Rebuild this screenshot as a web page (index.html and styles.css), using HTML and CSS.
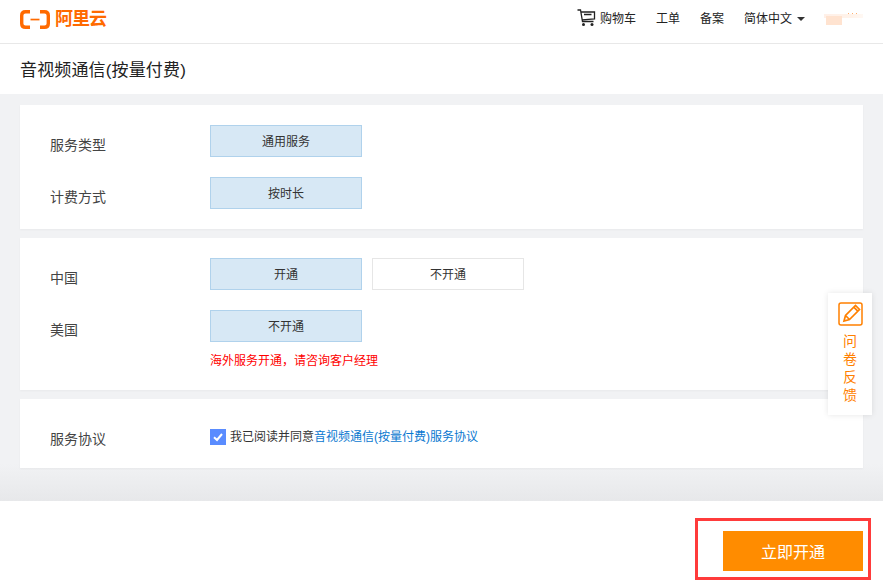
FILE: index.html
```html
<!DOCTYPE html>
<html lang="zh-CN">
<head>
<meta charset="utf-8">
<title>音视频通信(按量付费)</title>
<link rel="stylesheet" href="styles.css">
</head>
<body>
<header class="topbar">
  <a class="logo">
    <svg class="logo-icon" width="30" height="19" viewBox="0 0 30 19"><path d="M10 1.700H5.500C3 1.700 1.700 3 1.700 5.500V13.500C1.700 16 3 17.300 5.500 17.300H10" fill="none" stroke="#ff6a00" stroke-width="3.400"/><path d="M20 1.700H24.500C27 1.700 28.300 3 28.300 5.500V13.500C28.300 16 27 17.300 24.500 17.300H20" fill="none" stroke="#ff6a00" stroke-width="3.400"/><rect x="10.500" y="8.700" width="9" height="1.700" fill="#ff6a00"/></svg>
    <span class="logo-text">阿里云</span>
  </a>
  <nav class="topnav">
    <a class="nav-item cart">
      <svg width="19" height="18" viewBox="0 0 19 18"><path d="M0.500 1H3.500L5.500 12.500H16.500M4 3H17.500V9.800L5.200 10.800M7 5.500H14.500" fill="none" stroke="#222" stroke-width="1.300"/><circle cx="6.500" cy="15.500" r="1.500" fill="#222"/><circle cx="15" cy="15.500" r="1.500" fill="#222"/></svg>
      <span>购物车</span>
    </a>
    <a class="nav-item">工单</a>
    <a class="nav-item">备案</a>
    <a class="nav-item lang">简体中文<i class="caret"></i></a>
    <div class="user" aria-hidden="true"><i class="blur-a"></i><i class="blur-b"></i><i class="blur-c"></i></div>
  </nav>
</header>
<div class="titlebar"><h1>音视频通信(按量付费)</h1></div>
<main class="content">
  <section class="card card-a">
    <div class="row">
      <div class="label">服务类型</div>
      <div class="options"><button class="opt on">通用服务</button></div>
    </div>
    <div class="row">
      <div class="label">计费方式</div>
      <div class="options"><button class="opt on">按时长</button></div>
    </div>
  </section>
  <section class="card card-b">
    <div class="row">
      <div class="label">中国</div>
      <div class="options"><button class="opt on">开通</button><button class="opt">不开通</button></div>
    </div>
    <div class="row">
      <div class="label">美国</div>
      <div class="options"><button class="opt on">不开通</button></div>
    </div>
    <p class="warn">海外服务开通，请咨询客户经理</p>
  </section>
  <section class="card card-c">
    <div class="label">服务协议</div>
    <div class="agree">
      <span class="check"><svg width="16" height="16" viewBox="0 0 16 16"><path d="M4 8.300L7 11L12 5" fill="none" stroke="#fff" stroke-width="2"/></svg></span>
      <span class="agree-text">我已阅读并同意<a class="link">音视频通信(按量付费)服务协议</a></span>
    </div>
  </section>
</main>
<footer class="footer">
  <div class="highlight"><button class="submit">立即开通</button></div>
</footer>
<aside class="feedback">
  <svg width="26" height="24" viewBox="0 0 26 24"><rect x="1" y="1" width="23" height="22" rx="2" fill="none" stroke="#ff8000" stroke-width="1.500"/><path d="M6 19L7.500 13.500L17.500 3.500L21.500 7.500L11.500 17.500ZM15.800 5.200L19.800 9.200M7.500 13.500L11.500 17.500" fill="none" stroke="#ff8000" stroke-width="1.700"/></svg>
  <span class="fb-text">问</span><span class="fb-text">卷</span><span class="fb-text">反</span><span class="fb-text">馈</span>
</aside>
</body>
</html>
```

FILE: styles.css
```css
* { box-sizing: border-box; }
html, body { margin: 0; padding: 0; }
body {
  position: relative;
  width: 883px;
  height: 586px;
  overflow: hidden;
  background: #fff;
  color: #333;
  font-family: "Liberation Sans", "Noto Sans CJK SC", sans-serif;
  font-size: 12px;
}
.topbar {
  height: 44px;
  display: flex;
  justify-content: space-between;
  align-items: center;
  border-bottom: 1px solid #e8e8e8;
  padding: 0 20px 0 20px;
}
.logo { display: flex; align-items: center; gap: 5px; margin-bottom: 5px; }
.logo-text { color: #ff6a00; font-size: 18px; font-weight: 700; line-height: 20px; letter-spacing: -1px; }
.topnav { display: flex; align-items: center; color: #222; }
.nav-item { margin-left: 20px; line-height: 20px; margin-top: -5px; }
.cart { display: flex; align-items: center; gap: 4px; margin-left: 0; }
.cart svg { margin-top: -2px; }
.caret {
  display: inline-block;
  margin-left: 5px;
  vertical-align: 2px;
  border-top: 4px solid #333;
  border-left: 4px solid transparent;
  border-right: 4px solid transparent;
}
.user { position: relative; width: 39px; height: 12px; margin-left: 19px; margin-top: -5px; }
.user i { position: absolute; display: block; }
.blur-a { left: 0; top: 1px; width: 39px; height: 4px; background: linear-gradient(90deg, #fff0e8, #fff3ea 70%, #fff8f3); }
.blur-b { left: 2px; top: 3px; width: 16px; height: 9px; background: #ffe3d0; }
.blur-c { left: 24px; top: 0; width: 12px; height: 1px; background: repeating-linear-gradient(90deg, #ffb070 0 1px, #fff 1px 4px); }
.titlebar { height: 50px; display: flex; align-items: center; padding: 0 20px; }
.titlebar h1 { margin: 4px 0 0; font-size: 17px; font-weight: 400; color: #222; line-height: 50px; letter-spacing: 0.150px; }
.content {
  height: 407px;
  background: linear-gradient(#f1f2f4 0, #f1f2f4 370px, #e7e8ea 407px);
  padding: 11px 20px 0;
}
.card { background: #fff; box-shadow: 0 1px 2px rgba(0,0,0,.04); margin-bottom: 9px; padding: 20px 0 0 30px; }
.card-a { height: 124px; }
.card-b { height: 152px; }
.card-c { height: 69px; display: flex; padding-top: 30px; margin-bottom: 0; }
.row { display: flex; height: 32px; margin-bottom: 20px; }
.label { width: 160px; font-size: 14px; line-height: 20px; padding-top: 10px; color: #444; }
.card-c .label { padding-top: 0; }
.options { display: flex; gap: 10px; }
.opt {
  width: 152px;
  height: 32px;
  padding: 0 0 2px;
  background: #fff;
  border: 1px solid #e6e6e6;
  color: #333;
  font: inherit;
}
.opt.on { background: #d7e8f5; border-color: #b0d2ec; }
.warn { margin: -10px 0 0 160px; color: #f00; font-size: 12px; line-height: 18px; }
.agree { display: flex; align-items: center; gap: 4px; height: 16px; color: #333; }
.agree-text { margin-top: -3px; }
.check { width: 16px; height: 16px; background: #5a8cff; display: block; }
.check svg { display: block; }
.link { color: #0a78d0; }
.footer { height: 85px; padding: 17px 12px 0 0; display: flex; justify-content: flex-end; align-items: flex-start; }
.highlight { width: 176px; height: 62px; border: 3px solid #ff3b3b; padding: 10px 5px 0 25px; }
.submit {
  width: 140px;
  height: 40px;
  background: #ff8c00;
  color: #fff;
  border: 0;
  padding: 0;
  font: inherit;
  font-size: 16px;
}
.feedback {
  position: absolute;
  left: 828px;
  top: 293px;
  width: 44px;
  height: 122px;
  background: #fff;
  box-shadow: 0 0 6px rgba(0,0,0,.1);
  display: flex;
  flex-direction: column;
  align-items: center;
  padding-top: 9px;
}
.feedback svg { margin-bottom: 6px; margin-left: 1px; }
.fb-text { color: #ff7f00; font-size: 14px; line-height: 18px; }
```
